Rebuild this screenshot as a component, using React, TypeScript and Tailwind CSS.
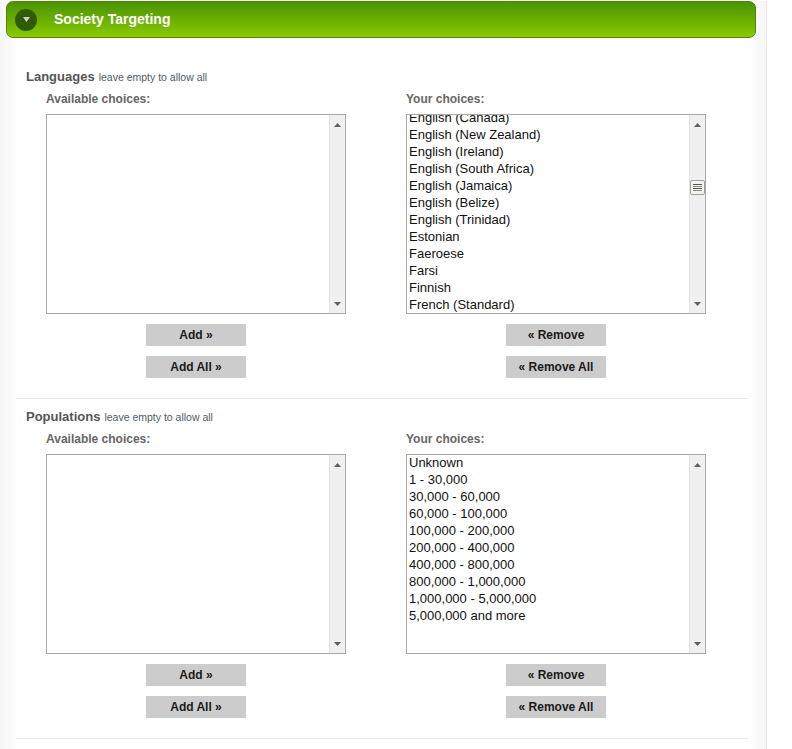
const languages = [
  'English (Canada)',
  'English (New Zealand)',
  'English (Ireland)',
  'English (South Africa)',
  'English (Jamaica)',
  'English (Belize)',
  'English (Trinidad)',
  'Estonian',
  'Faeroese',
  'Farsi',
  'Finnish',
  'French (Standard)',
];

const populations = [
  'Unknown',
  '1 - 30,000',
  '30,000 - 60,000',
  '60,000 - 100,000',
  '100,000 - 200,000',
  '200,000 - 400,000',
  '400,000 - 800,000',
  '800,000 - 1,000,000',
  '1,000,000 - 5,000,000',
  '5,000,000 and more',
];

function ScrollArrow({ down }: { down?: boolean }) {
  return (
    <svg width="7" height="4" viewBox="0 0 7 4" className="block">
      <path d={down ? 'M0 0h7L3.5 4z' : 'M3.5 0 7 4H0z'} fill="#5a6068" />
    </svg>
  );
}

function ScrollBar({ thumb }: { thumb?: boolean }) {
  return (
    <div className="w-[16px] shrink-0 h-full bg-[#f0f0f0] border-l border-[#e4e4e4] flex flex-col items-center relative">
      <div className="h-[19px] flex items-center justify-center shrink-0">
        <ScrollArrow />
      </div>
      {thumb && (
        <div className="absolute top-[65px] left-[0px] w-[15px] h-[15px] bg-[#f4f4ee] border border-[#a0a0a0] rounded-[2px] flex flex-col items-center justify-center gap-px">
          <div className="w-[9px] h-px bg-[#555]" />
          <div className="w-[9px] h-px bg-[#888]" />
          <div className="w-[9px] h-px bg-[#555]" />
          <div className="w-[9px] h-px bg-[#888]" />
        </div>
      )}
      <div className="h-[19px] mt-auto flex items-center justify-center shrink-0">
        <ScrollArrow down />
      </div>
    </div>
  );
}

function ChoiceList({
  items,
  thumb,
  offset,
}: {
  items: string[];
  thumb?: boolean;
  offset?: boolean;
}) {
  return (
    <div className="w-[300px] h-[200px] border border-[#a9a9a9] bg-white flex overflow-hidden">
      <div className={`flex-1 overflow-hidden px-[2px] ${offset ? '-mt-[6px]' : '-mt-px'}`}>
        {items.map((item) => (
          <div key={item} className="h-[17px] leading-[17px] text-[13px] text-[#111] whitespace-nowrap">
            {item}
          </div>
        ))}
      </div>
      <ScrollBar thumb={thumb} />
    </div>
  );
}

function ChoiceColumn({
  title,
  items,
  buttons,
  thumb,
  offset,
}: {
  title: string;
  items: string[];
  buttons: string[];
  thumb?: boolean;
  offset?: boolean;
}) {
  return (
    <div className="w-[300px]">
      <div className="h-[15px] mt-[4px] mb-[7px] leading-[15px] text-[12px] font-bold text-[#666]">{title}</div>
      <ChoiceList items={items} thumb={thumb} offset={offset} />
      <div className="flex flex-col items-center gap-[10px] mt-[10px]">
        {buttons.map((label) => (
          <button key={label} className="w-[100px] h-[22px] bg-[#cccccc] text-[12px] font-bold text-[#1a1a1a]">
            {label}
          </button>
        ))}
      </div>
    </div>
  );
}

function Section({
  name,
  leftItems,
  rightItems,
  thumb,
  offset,
}: {
  name: string;
  leftItems: string[];
  rightItems: string[];
  thumb?: boolean;
  offset?: boolean;
}) {
  return (
    <section className="h-[333px] border-b border-[#e8e8e8]">
      <div className="h-[22px] pl-[10px] flex items-baseline gap-[4px] leading-[22px]">
        <span className="text-[13px] font-bold text-[#555]">{name}</span>
        <span className="text-[10.5px] text-[#4f5b66]">leave empty to allow all</span>
      </div>
      <div className="pl-[30px] flex gap-[60px]">
        <ChoiceColumn title="Available choices:" items={leftItems} buttons={['Add »', 'Add All »']} />
        <ChoiceColumn
          title="Your choices:"
          items={rightItems}
          buttons={['« Remove', '« Remove All']}
          thumb={thumb}
          offset={offset}
        />
      </div>
    </section>
  );
}

export default function App() {
  return (
    <div className="w-[792px] h-[749px] overflow-hidden bg-white font-['Liberation_Sans',Arial,sans-serif]">
      <div className="w-[767px] h-full border-r border-[#e8e8e8] bg-[linear-gradient(to_right,#f6f6f6_0px,#fcfcfc_14px,#ffffff_16px,#ffffff_748px,#f6f6f6_766px)]">
        {/* Green header */}
        <div className="ml-[6px] mt-px w-[750px] h-[37px] rounded-[7px] border border-[#4a8a06] bg-gradient-to-b from-[#4a9300] to-[#8aca00] flex items-center">
          <div className="ml-[8px] w-[22px] h-[22px] rounded-full bg-[#2f5c02] flex items-center justify-center">
            <svg width="7" height="5" viewBox="0 0 7 5">
              <path d="M0 0h7L3.5 5z" fill="#cfcfcf" />
            </svg>
          </div>
          <span className="ml-[17px] text-[14px] font-bold text-white">Society Targeting</span>
        </div>

        <div className="ml-[16px] mr-[18px] mt-[28px] bg-white">
          <Section name="Languages" leftItems={[]} rightItems={languages} thumb offset />
          <div className="h-[7px]" />
          <Section name="Populations" leftItems={[]} rightItems={populations} />
        </div>
      </div>
    </div>
  );
}
